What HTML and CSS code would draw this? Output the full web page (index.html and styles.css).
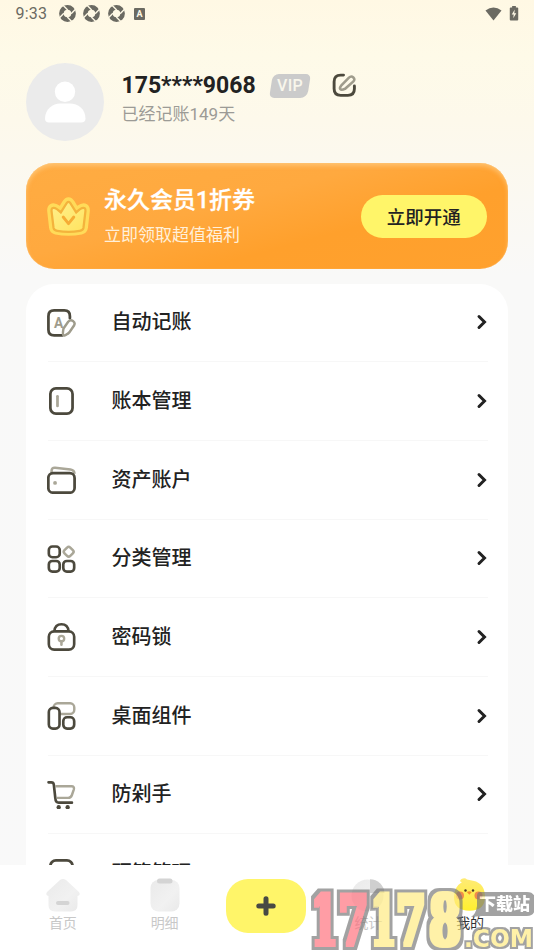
FILE: index.html
```html
<!DOCTYPE html>
<html lang="zh-CN">
<head>
<meta charset="utf-8">
<meta name="viewport" content="width=device-width, initial-scale=1">
<title>我的</title>
<link rel="stylesheet" href="styles.css">
</head>
<body>
<svg class="defs" aria-hidden="true">
  <defs>
    <symbol id="shutter" viewBox="0 0 16 16">
      <circle cx="8" cy="8" r="5.7" fill="none" stroke="#6b6a62" stroke-width="4.4"/>
      <path d="M3.6 0L8.2 4.6M16 3.6L11.4 8.2M12.4 16L7.8 11.4M0 12.4L4.6 7.8" stroke="#fff9e6" stroke-width="1.3"/>
    </symbol>
    <symbol id="chevron" viewBox="0 0 12 16">
      <path d="M3 2.5L8.5 8L3 13.5" fill="none" stroke="#222" stroke-width="3" stroke-linecap="round" stroke-linejoin="miter"/>
    </symbol>
    <linearGradient id="crownFill" x1="0" y1="0" x2="1" y2="1"><stop offset="0" stop-color="#fff08b"/><stop offset="1" stop-color="#ffe35f"/></linearGradient>
    <linearGradient id="pale" x1="0" y1="0" x2="1" y2="1"><stop offset="0" stop-color="#eaeaea"/><stop offset=".6" stop-color="#f1f1f1"/><stop offset="1" stop-color="#e9e9e9"/></linearGradient>
    <linearGradient id="chick" x1="0" y1="0" x2="0" y2="1"><stop offset="0" stop-color="#ffeb75"/><stop offset="1" stop-color="#ffef2f"/></linearGradient>
    <filter id="block" x="-10%" y="-20%" width="120%" height="140%" color-interpolation-filters="sRGB">
      <feMorphology in="SourceGraphic" operator="dilate" radius="2" result="fat"/>
      <feMorphology in="SourceAlpha" operator="dilate" radius="5" result="edge"/>
      <feFlood flood-color="#777"/>
      <feComposite in2="edge" operator="in" result="rim"/>
      <feMerge><feMergeNode in="rim"/><feMergeNode in="fat"/></feMerge>
    </filter>
    <filter id="rimOnly" x="-10%" y="-20%" width="120%" height="140%" color-interpolation-filters="sRGB">
      <feMorphology in="SourceAlpha" operator="dilate" radius="2" result="edge"/>
      <feFlood flood-color="#777"/>
      <feComposite in2="edge" operator="in" result="rim"/>
      <feMerge><feMergeNode in="rim"/><feMergeNode in="SourceGraphic"/></feMerge>
    </filter>
  </defs>
</svg>
<div class="app">
  <header class="status">
    <span class="clock">9:33</span>
    <svg class="shutter"><use href="#shutter"/></svg>
    <svg class="shutter"><use href="#shutter"/></svg>
    <svg class="shutter"><use href="#shutter"/></svg>
    <span class="ime">A</span>
    <svg class="wifi" viewBox="0 0 18 14"><path d="M.5 3.2Q9-2.8 17.5 3.2L9 14Z" fill="#6b6a62"/></svg>
    <svg class="battery" viewBox="0 0 10 16"><path d="M3 0h4v1.5h1.5Q9.5 1.5 9.5 2.5V14.5Q9.5 15.5 8.5 15.5h-7Q.5 15.5 .5 14.5V2.5Q.5 1.5 1.5 1.5H3Z" fill="#6b6a62"/><path d="M5.8 3.8L2.6 9h2.1L4.2 13 7.4 7.8H5.3Z" fill="#fff9e6"/></svg>
  </header>

  <section class="profile">
    <svg class="avatar" viewBox="0 0 78 78"><circle cx="39" cy="39" r="39" fill="#ebebeb"/><circle cx="39" cy="28.8" r="10.2" fill="#fff"/><path d="M19 55.5C19 46 27 40.5 34 40.5H44C52 40.5 59.5 46 59.5 55.5Q59.5 59.5 55 59.5H23Q19 59.5 19 55.5Z" fill="#fff"/></svg>
    <div class="who">
      <div class="name-line">
        <span class="phone">175****9068</span>
        <span class="vip"><b>VIP</b></span>
        <svg class="edit" viewBox="0 0 26 26"><path d="M12 2.2H9Q2.2 2.2 2.2 9V16.5Q2.2 23.3 9 23.3H16.5Q23.3 23.3 23.3 16.5V13.5" fill="none" stroke="#4c493d" stroke-width="3" stroke-linecap="round"/><path d="M9.5 13.2L17.6 4.8Q20 2.6 22.2 4.6T22 9L13.6 16.4Q9.8 18 8.7 16.8T9.5 13.2Z" fill="none" stroke="#9f9c8c" stroke-width="2.7"/></svg>
      </div>
      <div class="days">已经记账149天</div>
    </div>
  </section>

  <section class="banner">
    <svg class="crown" viewBox="1 1 42 38" preserveAspectRatio="none">
      <path d="M22 1.2Q25.5 1.2 28 5.5L30.5 9.5Q36 5.5 40 8Q43.2 10 42.8 15L41 31Q40.3 36.5 35 37.5Q22 40 9 37.5Q3.7 36.5 3 31L1.2 15Q.8 10 4 8Q8 5.5 13.5 9.5L16 5.5Q18.5 1.2 22 1.2Z" fill="#ffdb59"/>
      <path d="M20.5 6.5Q22 4.8 23.5 6.5L29.5 16Q35.5 10 38 12Q39 13 38.3 17L36.6 31.2Q36 33.6 33 34Q22 35.8 11 34Q8 33.6 7.4 31.2L5.7 17Q5 13 6 12Q8.5 10 14.5 16Z" fill="url(#crownFill)" stroke="#f4b33c" stroke-width="2.2"/>
      <path d="M16.8 20.5L22 27L27.2 20.5" fill="none" stroke="#f6ad35" stroke-width="2.8" stroke-linecap="round" stroke-linejoin="round"/>
    </svg>
    <div class="offer"><h2>永久会员1折券</h2><p>立即领取超值福利</p></div>
    <button class="open">立即开通</button>
  </section>

  <main class="menu">
    <a class="row"><svg class="icon" viewBox="1 1 28 28"><path d="M23.5 10V8Q23.5 2.4 18 2.4H8Q2.4 2.4 2.4 8V21.5Q2.4 27 8 27H16" fill="none" stroke="#4c493d" stroke-width="2.7" stroke-linecap="round"/><text x="7.9" y="19.5" class="mini-a">A</text><path d="M17.2 20.2L21.8 13.6Q24 11 26.5 12.8T27.7 17L22.9 24Q21.7 25.4 20.2 26Q17.8 27.8 17 26.6T17.2 20.2Z" fill="#fff" stroke="#9f9c8c" stroke-width="2.4"/></svg><span>自动记账</span><svg class="chevron"><use href="#chevron"/></svg></a>
    <a class="row"><svg class="icon" viewBox="1 1 28 28"><rect x="4.3" y="2.4" width="21.8" height="24.8" rx="5.5" fill="none" stroke="#4c493d" stroke-width="2.7"/><path d="M11.3 10.2v9.4" stroke="#aaa798" stroke-width="2.7" stroke-linecap="round"/></svg><span>账本管理</span><svg class="chevron"><use href="#chevron"/></svg></a>
    <a class="row"><svg class="icon" viewBox="1 1 28 28"><path d="M5.5 8V6Q5.5 2.4 9 2.7L24 4.4Q28 5 28 8.6" fill="none" stroke="#aaa798" stroke-width="2.5"/><rect x="2.3" y="8" width="25.8" height="19.2" rx="4.7" fill="#fff" stroke="#4c493d" stroke-width="2.7"/><circle cx="8.9" cy="17.6" r="1.9" fill="#aaa798"/></svg><span>资产账户</span><svg class="chevron"><use href="#chevron"/></svg></a>
    <a class="row"><svg class="icon" viewBox="1 1 28 28"><g fill="none" stroke="#4c493d" stroke-width="2.6"><rect x="2.8" y="2.5" width="10.7" height="10.5" rx="3.5"/><rect x="2.8" y="16.7" width="10.7" height="10.5" rx="3.5"/><rect x="17" y="16.7" width="10.7" height="10.5" rx="3.5"/></g><rect x="18.3" y="3.6" width="8" height="8" rx="2.2" transform="rotate(45 22.3 7.6)" fill="none" stroke="#aaa798" stroke-width="2.5"/></svg><span>分类管理</span><svg class="chevron"><use href="#chevron"/></svg></a>
    <a class="row"><svg class="icon" viewBox="1 1 28 28"><path d="M8.2 9.2Q8.8 2.3 15.2 2.3T22.2 9.2" fill="none" stroke="#4c493d" stroke-width="2.5"/><rect x="2.8" y="9.2" width="24.9" height="18" rx="5.3" fill="none" stroke="#4c493d" stroke-width="2.6"/><circle cx="15.2" cy="16.3" r="2.7" fill="none" stroke="#aaa798" stroke-width="2.3"/><path d="M15.2 19v3.4" stroke="#aaa798" stroke-width="2.5" stroke-linecap="round"/></svg><span>密码锁</span><svg class="chevron"><use href="#chevron"/></svg></a>
    <a class="row"><svg class="icon" viewBox="1 1 28 28"><rect x="7.5" y="2.3" width="20.3" height="10.4" rx="4" fill="none" stroke="#aaa798" stroke-width="2.4"/><rect x="2.8" y="6.8" width="10.5" height="20.3" rx="4" fill="#fff" stroke="#4c493d" stroke-width="2.6"/><rect x="17" y="16" width="10.7" height="11.1" rx="3.7" fill="#fff" stroke="#4c493d" stroke-width="2.6"/></svg><span>桌面组件</span><svg class="chevron"><use href="#chevron"/></svg></a>
    <a class="row"><svg class="icon" viewBox="1 1 28 28"><path d="M9.4 6.2H25Q28.3 6.2 27.3 9.4L25.4 15Q24.5 17.6 21.8 17.6H10.8" fill="none" stroke="#aaa798" stroke-width="2.4"/><path d="M2.5 2.3H5.2Q7.4 2.3 7.7 4.5L9.2 18Q9.4 22.3 12.5 22.3H25.5" fill="none" stroke="#4c493d" stroke-width="2.6" stroke-linecap="round"/><circle cx="12.5" cy="26.8" r="2.1" fill="#4c493d"/><circle cx="21.3" cy="26.8" r="2.1" fill="#4c493d"/></svg><span>防剁手</span><svg class="chevron"><use href="#chevron"/></svg></a>
    <a class="row"><svg class="icon" viewBox="1 1 28 28"><rect x="4.3" y="2.4" width="21.8" height="24.8" rx="5.5" fill="none" stroke="#4c493d" stroke-width="2.7"/></svg><span>预算管理</span><svg class="chevron"><use href="#chevron"/></svg></a>
  </main>

  <nav class="tabs">
    <a class="tab"><svg viewBox="0 0 36 34"><path d="M15 2Q18 0 21 2L34 14Q36 17 32.5 18V27Q32.5 33.5 26 33.5H10Q3.5 33.5 3.5 27V18Q0 17 2 14Z" fill="url(#pale)"/><rect x="11" y="23" width="13.5" height="4" rx="2" fill="#d4d4d4"/></svg><span>首页</span></a>
    <a class="tab"><svg viewBox="0 0 36 34"><rect x="3.5" y="2" width="29" height="31.5" rx="8" fill="url(#pale)"/><rect x="10" y=".6" width="15.5" height="5" rx="2.5" fill="#d4d4d4"/></svg><span>明细</span></a>
    <a class="add"><svg viewBox="0 0 20 20"><path d="M10 2.8v14.4M2.8 10h14.4" stroke="#484944" stroke-width="5" stroke-linecap="round"/></svg></a>
    <a class="tab"><svg viewBox="0 0 36 34"><circle cx="17.5" cy="17.5" r="16" fill="url(#pale)"/><path d="M20 1.2A14.5 14.5 0 0 1 34.5 15H20Z" fill="#cfcfcf"/></svg><span>统计</span></a>
    <a class="tab active"><svg viewBox="0 0 36 34"><path d="M10 4Q6.5 3.5 9.5 1Q13-.5 15 1.5L21 2.8C30 4.5 33 11 33 19Q33 32.7 17.5 32.7T2 19Q2 9 10 4Z" fill="url(#chick)"/><circle cx="8" cy="17.5" r="4" fill="#f18b49"/><circle cx="26.5" cy="17.5" r="4" fill="#f18b49"/><circle cx="13.5" cy="12.5" r="1.2" fill="#4b3926"/><circle cx="21" cy="12.5" r="1.2" fill="#4b3926"/><path d="M14.8 14Q17.3 12.5 19.8 14L17.3 16.8Z" fill="#f4922d"/></svg><span>我的</span></a>
  </nav>
</div>

<svg class="mark" viewBox="0 0 225 62">
  <g class="digits" filter="url(#block)">
    <g fill="#ff6f7c"><text transform="translate(2.5 57) scale(.54 1)">1</text><text transform="translate(29.5 57) scale(.62 1)">7</text></g>
    <g fill="#ffeb80"><text transform="translate(62 57) scale(.52 1)">1</text><text transform="translate(87 57) scale(.62 1)">7</text><text transform="translate(120 57) scale(.67 1)">8</text></g>
  </g>
  <path d="M171 4H218Q226 4 226 12V19Q226 28 218 28H173L162 29Q167 26 168 18V8Q168 4 171 4Z" class="bubble"/>
  <text x="170" y="22.3" class="site" textLength="51" lengthAdjust="spacingAndGlyphs">下载站</text>
  <text x="155" y="58.5" class="domain" filter="url(#rimOnly)" textLength="69" lengthAdjust="spacingAndGlyphs">.COM</text>
</svg>
</body>
</html>
```

FILE: styles.css
```css
* { box-sizing: border-box; }
body {
  margin: 0;
  height: 950px;
  overflow: hidden;
  font-family: Roboto, "Noto Sans CJK SC", sans-serif;
  color: #222;
  background: linear-gradient(#fff8e4 0, #fefae8 55px, #fdf9eb 120px, #f9f9f8 275px, #f9f9f9 100%);
}
.defs { position: absolute; width: 0; height: 0; }
.app { display: flex; flex-direction: column; height: 950px; }

.status { display: flex; align-items: center; height: 27px; padding: 0 15px 0 15.5px; color: #6b6a62; flex: none; }
.clock { width: 43px; font-size: 16px; letter-spacing: .2px; }
.shutter { width: 17px; height: 17px; margin-right: 7.5px; }
.ime { width: 11px; height: 12px; margin-left: 2px; border-radius: 1px; background: #6b6a62; color: #fff9e6; font-size: 9px; font-weight: 700; line-height: 12px; text-align: center; }
.wifi { width: 17px; height: 14px; margin-left: auto; margin-right: 7px; }
.battery { width: 10px; height: 15px; }

.profile { display: flex; flex: none; height: 114px; padding: 35.5px 0 0 26px; gap: 17.5px; }
.avatar { width: 78px; height: 78px; flex: none; }
.who { padding-top: 9px; }
.name-line { display: flex; align-items: center; height: 28px; }
.phone { width: 134px; font-size: 23px; font-weight: 700; white-space: nowrap; }
.vip { width: 38px; height: 24px; margin-left: 15.5px; border-radius: 6px 5px 7px 5px; background: #cbcbcb; transform: skewX(-9deg); color: #f8f6ec; text-align: center; }
.vip b { display: block; transform: skewX(9deg); font-size: 16px; font-weight: 500; line-height: 24px; letter-spacing: .3px; }
.edit { width: 25px; height: 25px; margin-left: 23px; }
.days { margin-top: 2.5px; font-size: 17px; line-height: 24px; color: #9c9b96; }

.banner { display: flex; align-items: center; flex: none; height: 106px; margin: 22px 26px 0; padding: 0 21px; border-radius: 28px; background: linear-gradient(165deg, #ffac42 0, #ffa93f 40%, #ffa02c 65%, #ffa12e 100%); box-shadow: inset 0 3px 4px rgba(255, 220, 160, .5), inset 0 0 1px #ffc67f; }
.crown { width: 43px; height: 39px; }
.offer { flex: 1; margin-left: 14px; color: #fff; }
.offer h2 { margin: 0; font-size: 23px; font-weight: 500; line-height: 30px; -webkit-text-stroke: .3px #fff; }
.offer p { margin: 7px 0 0; font-size: 17px; line-height: 24px; color: #fff0db; }
.open { width: 126.5px; height: 43px; border: 0; border-radius: 22px; background: #fff569; color: #222; font: 500 18.5px Roboto, "Noto Sans CJK SC", sans-serif; padding: 0 0 1px; }

.menu { flex: 1; min-height: 0; overflow: hidden; margin: 14.5px 26px 0; padding: 0 20px 0 21.5px; border-radius: 28px 28px 0 0; background: #fff; }
.row { display: flex; align-items: center; height: 78.7px; border-bottom: 1.5px solid #f7f7f7; }
.icon { width: 28.5px; height: 28.5px; margin-left: -.5px; margin-top: 1px; }
.row span { margin-left: 36px; font-size: 20px; font-weight: 500; line-height: 28px; }
.chevron { width: 12px; height: 16px; margin-left: auto; }
.mini-a { font: 700 13.5px Roboto, sans-serif; fill: #9f9c8c; }

.tabs { display: flex; flex: none; align-items: flex-start; height: 85px; padding: 13px 13px 0 12px; background: #fff; }
.tab { display: flex; flex: 1; flex-direction: column; align-items: center; color: #c8c8c8; font-size: 14px; line-height: 20px; }
.tab svg { width: 36px; height: 34px; margin-bottom: 1px; }
.tab.active { color: #333; }
.add { display: flex; align-items: center; justify-content: center; width: 80px; height: 54px; margin: 1px 12px 0 10px; border-radius: 22px; background: #fff569; }
.add svg { width: 20px; height: 20px; }

.mark { position: absolute; left: 309px; top: 888px; width: 225px; height: 62px; opacity: .68; overflow: hidden; }
.digits text { font: 700 69px "DejaVu Serif", serif; }
.bubble { fill: #777; }
.site { font: 900 17px "Noto Sans CJK SC", sans-serif; fill: #fff; }
.domain { font: 700 25px "DejaVu Sans", sans-serif; fill: #ffeb80; }
```
